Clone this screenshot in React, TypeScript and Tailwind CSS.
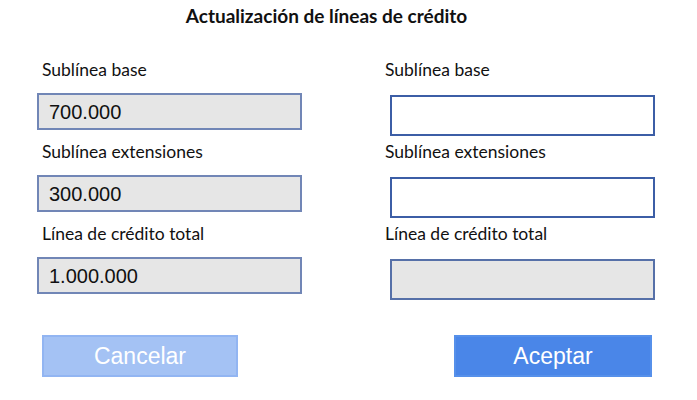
import React from 'react';

const labelFont = { fontFamily: 'Lato, "Open Sans", sans-serif' } as React.CSSProperties;

interface FieldProps {
  label: string;
  value?: string;
  readOnly?: boolean;
  side: 'left' | 'right';
}

const Field: React.FC<FieldProps> = ({ label, value, readOnly, side }) => {
  const left = side === 'left';
  return (
    <div className="flex flex-col h-[82px]">
      <div
        className={
          left
            ? 'h-[38px] pl-[5px] pt-[4px] text-[17.5px] leading-[22px] text-[#111]'
            : 'h-[40px] -ml-[5px] pt-[4px] text-[17.5px] leading-[22px] text-[#111]'
        }
        style={labelFont}
      >
        {label}
      </div>
      <div
        className={
          readOnly
            ? left
              ? "h-[37px] flex items-center pl-[10px] bg-[#e6e6e6] border-2 border-[#7186b6] text-[20px] text-[#111] font-['Liberation_Sans',Arial,sans-serif]"
              : 'h-[41px] bg-[#e6e6e6] border-2 border-[#5670a8]'
            : 'h-[41px] bg-white border-2 border-[#3c5ea6]'
        }
      >
        {value}
      </div>
    </div>
  );
};

export default function App() {
  return (
    <div className="w-[697px] h-[400px] bg-white relative overflow-hidden">
      <div className="h-[34px] pt-[4px] pr-[44px] text-center text-[19px] leading-[24px] font-bold text-[#111]" style={labelFont}>
        Actualización de líneas de crédito
      </div>
      <div className="flex pt-[21px]">
        <div className="ml-[37px] w-[265px] flex flex-col">
          <Field side="left" label="Sublínea base" value="700.000" readOnly />
          <Field side="left" label="Sublínea extensiones" value="300.000" readOnly />
          <Field side="left" label="Línea de crédito total" value="1.000.000" readOnly />
        </div>
        <div className="ml-[88px] w-[265px] flex flex-col">
          <Field side="right" label="Sublínea base" />
          <Field side="right" label="Sublínea extensiones" />
          <Field side="right" label="Línea de crédito total" readOnly />
        </div>
      </div>
      <div className="flex mt-[34px]">
        <button className="ml-[42px] w-[196px] h-[42px] bg-[#a4c2f4] border-2 border-[#92b5f2] text-white text-[23px] font-['Liberation_Sans',Arial,sans-serif]">
          Cancelar
        </button>
        <button className="ml-[216px] w-[198px] h-[42px] bg-[#4a86e8] border-2 border-[#5690ea] text-white text-[23px] font-['Liberation_Sans',Arial,sans-serif]">
          Aceptar
        </button>
      </div>
    </div>
  );
}
